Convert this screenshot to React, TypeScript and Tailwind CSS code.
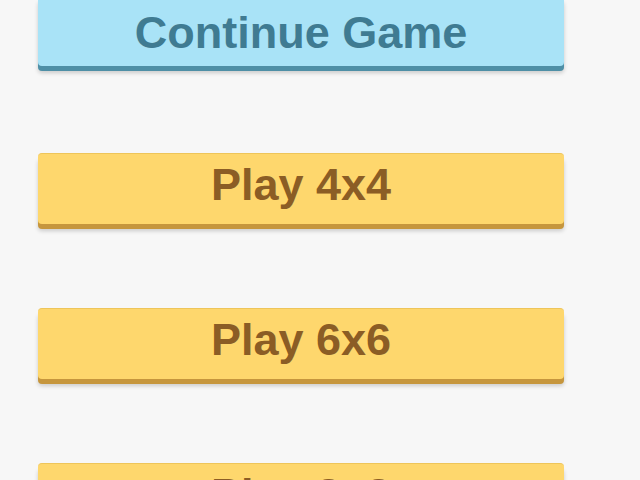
const font = { fontFamily: '"Liberation Sans", Arial, sans-serif' };

type MenuButtonProps = {
  label: string;
  variant: "blue" | "yellow";
  className?: string;
};

const MenuButton = ({ label, variant, className = "" }: MenuButtonProps) => {
  const styles =
    variant === "blue"
      ? "bg-[#a9e3f7] text-[#3f7b92] border-t border-[#9bd6ea] shadow-[0_5px_0_#4e8fa6,0_7px_4px_rgba(0,0,0,0.18)] pt-[12px]"
      : "bg-[#fed76d] text-[#8b5d25] border-t border-[#eec55a] shadow-[0_5px_0_#c6963d,0_7px_4px_rgba(0,0,0,0.18)] pt-[6px]";

  return (
    <button
      className={`w-[526px] h-[71px] rounded-[4px] flex justify-center items-start text-[45px] font-bold leading-[50px] ${styles} ${className}`}
      style={font}
    >
      {label}
    </button>
  );
};

export default function App() {
  return (
    <div className="w-[640px] h-[480px] overflow-hidden bg-[#f7f7f7]">
      <div className="flex flex-col pl-[38px] -mt-[5px]">
        <MenuButton label="Continue Game" variant="blue" className="mb-[87px]" />
        <MenuButton label="Play 4x4" variant="yellow" className="mb-[84px]" />
        <MenuButton label="Play 6x6" variant="yellow" className="mb-[84px]" />
        <MenuButton label="Play 8x8" variant="yellow" />
      </div>
    </div>
  );
}
